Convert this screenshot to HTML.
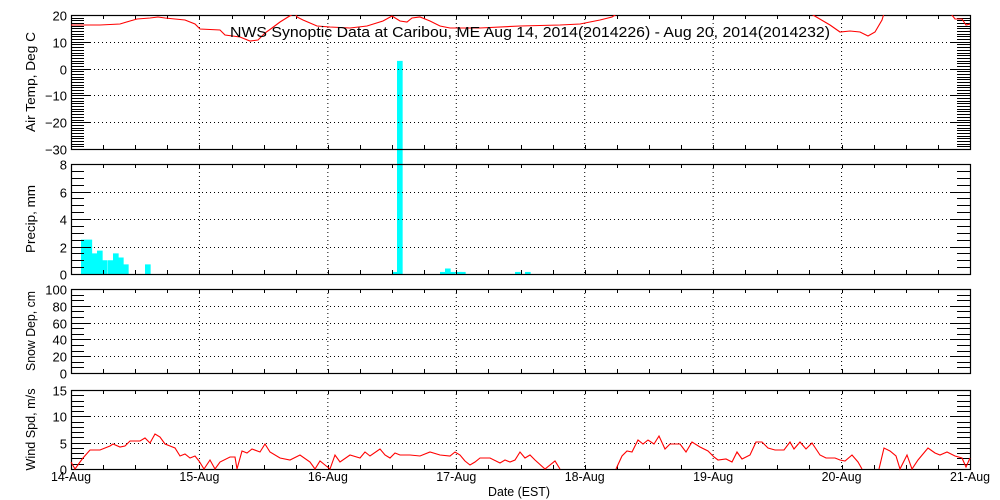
<!DOCTYPE html>
<html><head><meta charset="utf-8"><style>
html,body{margin:0;padding:0;background:#fff;width:1000px;height:500px;overflow:hidden}
svg{display:block}
text{font-family:"Liberation Sans",sans-serif;font-size:12px;fill:#000}
</style></head><body>
<svg id="s" width="1000" height="500" xmlns="http://www.w3.org/2000/svg"></svg>
<script>
var s=document.getElementById('s'),o='';
var L=71,R=970,D=(R-L)/7;
function ln(x1,y1,x2,y2,st){o+='<line x1="'+x1+'" y1="'+y1+'" x2="'+x2+'" y2="'+y2+'" stroke="'+(st||'#000')+'" stroke-width="1"/>';}
function dl(x1,y1,x2,y2){o+='<line x1="'+x1+'" y1="'+y1+'" x2="'+x2+'" y2="'+y2+'" stroke="#000" stroke-width="1" stroke-dasharray="1,3"/>';}
function panel(top,bot,vmin,vmax,major,minor,title,tl){
  var h=bot-top;function Y(v){return bot-(v-vmin)/(vmax-vmin)*h;}
  for(var d=1;d<7;d++)dl(L+d*D,top,L+d*D,bot);
  for(var v=vmin;v<=vmax+1e-6;v+=minor){var y=Math.round(Y(v))+.5;ln(L,y,L+13,y);ln(R-13,y,R,y);}
  for(var v=vmin;v<=vmax+1e-6;v+=major){var y=Math.round(Y(v))+.5;ln(L,y,L+19,y);ln(R-19,y,R,y);
    if(v>vmin&&v<vmax)dl(L+19,y,R-19,y);
    o+='<text x="67" y="'+(y+5)+'" text-anchor="end" style="font-size:13px">'+(v<0?'\u2212'+(-v):v)+'</text>';}
  for(var q=1;q<28;q++){var x=Math.round(L+q*D/4)+.5;ln(x,top,x,top+4);ln(x,bot-4,x,bot);}
  o+='<rect x="'+(L+.5)+'" y="'+(top+.5)+'" width="'+(R-L)+'" height="'+(bot-top)+'" fill="none" stroke="#000" stroke-width="1.2"/>';
  o+='<text transform="translate(35,'+((top+bot)/2)+') rotate(-90)" text-anchor="middle" textLength="'+tl+'" lengthAdjust="spacingAndGlyphs" style="font-size:13px">'+title+'</text>';
}
function pl(pts,c){o+='<polyline fill="none" stroke="'+(c||'red')+'" stroke-width="1.1" points="'+pts+'"/>';}
var PT=164,PB=274,pk=(PB-PT)/8,bw=D/24;
var bars=[[81,2.5],[86.5,2.5],[92,1.5],[97,1.7],[102,1],[108,1],[113,1.5],[118,1.2],[123,0.7],[145,0.7],[392,0.15],[397,15.5],[440,0.15],[445,0.4],[450,0.15],[456,0.15],[460,0.15],[515,0.15],[525,0.15]];
bars.forEach(function(b){o+='<rect x="'+b[0]+'" y="'+(PB-b[1]*pk)+'" width="'+(bw+0.3)+'" height="'+(b[1]*pk)+'" fill="#00ffff"/>';});
panel(15,149,-30,20,10,1,'Air Temp, Deg C',100);
panel(164,274,0,8,2,0.5,'Precip, mm',68);
panel(289,373,0,100,20,100/15,'Snow Dep, cm',80);
panel(390,469,0,15,5,1,'Wind Spd, m/s',82);
o+='<svg x="71" y="15" width="899" height="135" overflow="hidden"><g transform="translate(-71,-15)">';
pl("71,25 100,25 120,24 130,21 137,19 150,18 158,17 165,18 175,19 185,20 195,24 200,29 220,30 225,35 240,37 250,41 258,40 265,33 272,28 280,22 288,17 295,13 297,17 303,20 317,26 330,27 350,28 367,26 383,21 392,16 400,21 407,22 412,18 420,17 430,21 440,26 450,28 480,28 520,26 560,25 580,24 600,20 612,17 620,12");
pl("806,10 813,15 830,25 840,32 850,31 860,32 868,36 875,32 882,20 885,10");
pl("948,10 955,19 962,19 966,25 970,24");
o+='</g></svg>';
pl("71,462 75,469 80,462 83,458 90,450 100,450 110,446 113,444 120,447 125,446 130,441 135,441 140,441 145,438 150,443 155,434 160,437 165,444 170,446 175,448 180,456 185,454 190,458 195,456 199,461 204,469 210,460 215,469 220,462 230,457 235,457 237,469 242,451 247,453 252,449 260,452 265,444 270,452 280,458 290,460 300,455 310,462 315,469 320,461 325,465 330,469 335,455 340,462 350,455 360,458 365,452 370,456 380,449 385,455 390,458 395,453 400,455 410,455 420,456 430,452 440,455 450,456 455,452 460,455 465,461 470,465 475,462 480,458 490,458 500,463 505,460 510,462 515,460 520,452 525,458 530,455 535,460 545,469 555,461 560,469");
pl("616,469 622,456 627,451 632,452 638,440 643,444 648,440 654,444 659,436 665,449 670,444 680,444 686,452 692,442 700,447 708,451 714,457 718,460 726,459 732,462 737,452 742,459 750,455 756,442 762,442 768,448 775,450 784,450 790,442 794,449 800,442 806,449 812,443 820,455 826,458 835,458 840,460 845,461 852,455 858,462 862,469");
pl("879,469 884,448 890,451 896,456 900,469 907,455 912,469 918,460 928,448 935,453 940,455 947,452 955,456 962,458 966,467 970,458");
var days=['14-Aug','15-Aug','16-Aug','17-Aug','18-Aug','19-Aug','20-Aug','21-Aug'];
days.forEach(function(d,i){o+='<text x="'+(L+i*D)+'" y="481" text-anchor="middle" textLength="40" lengthAdjust="spacingAndGlyphs" style="font-size:13px">'+d+'</text>';});
o+='<text x="519" y="496" text-anchor="middle" textLength="62" lengthAdjust="spacingAndGlyphs" style="font-size:13px">Date (EST)</text>';
o+='<text x="230" y="37" textLength="600" lengthAdjust="spacingAndGlyphs" style="font-size:15px">NWS Synoptic Data at Caribou, ME   Aug 14, 2014(2014226) - Aug 20, 2014(2014232)</text>';
s.innerHTML=o;
</script>
</body></html>
